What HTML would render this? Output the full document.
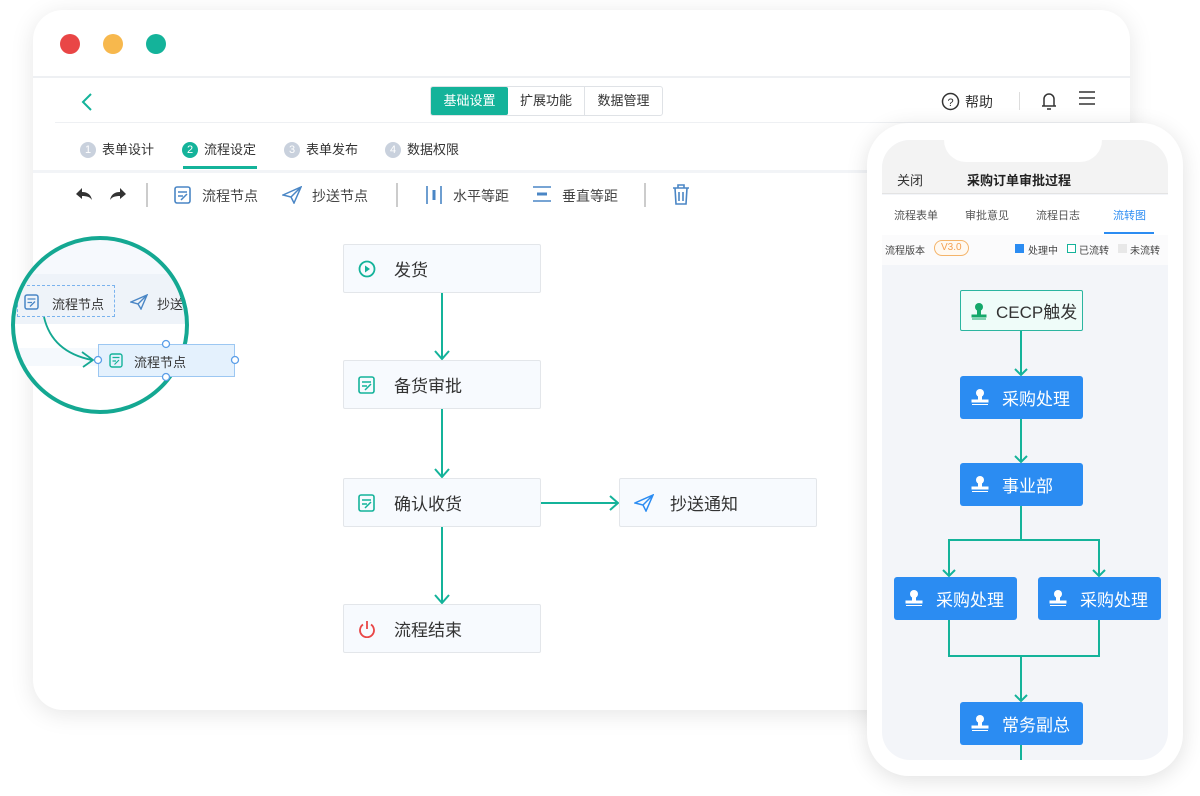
<!DOCTYPE html>
<html><head><meta charset="utf-8"><style>
*{box-sizing:border-box;margin:0;padding:0}
body{width:1200px;height:796px;background:#fff;position:relative;overflow:hidden;font-family:"Liberation Sans","Noto Sans CJK SC",sans-serif;color:#333}
.abs{position:absolute}
.win{left:33px;top:10px;width:1097px;height:700px;border-radius:30px;background:#fff;box-shadow:0 4px 24px rgba(0,0,0,.10)}
.dot{width:20px;height:20px;border-radius:50%;top:34px}
.node{background:#f7fafe;border:1px solid #e3e6ea;border-radius:2px;width:198px;height:49px;font-size:17px;color:#333;display:flex;align-items:center;padding-left:50px}
.node svg{position:absolute;left:14px;top:15px}
.pn{background:#2b8cf2;color:#fff;border-radius:3px;width:123px;height:43px;display:flex;align-items:center;font-size:17px;padding-left:42px}
.pn svg{position:absolute;left:10px;top:12px}
.tb{font-size:14px;color:#444}
.num{display:inline-block;width:16px;height:16px;border-radius:50%;background:#c9d1dd;color:#fff;font-size:11px;text-align:center;line-height:16px;margin-right:6px;vertical-align:1px}
</style></head><body>
<div class="abs win"></div>
<div class="abs dot" style="left:60px;background:#e94646"></div>
<div class="abs dot" style="left:103px;background:#f7b84d"></div>
<div class="abs dot" style="left:146px;background:#14b39a"></div>
<div class="abs" style="left:33px;top:76px;width:1097px;height:2px;background:#eef0f3"></div>
<!-- header -->
<svg class="abs" style="left:80px;top:92px" width="14" height="20"><path d="M11 2 L3 10 L11 18" stroke="#14b39a" stroke-width="2" fill="none"/></svg>
<div class="abs" style="left:430px;top:86px;width:233px;height:30px;border:1px solid #dfe2e6;border-radius:3px;display:flex;font-size:13px">
<div style="width:77px;background:#14b39a;color:#fff;text-align:center;line-height:28px;border-radius:2px">基础设置</div>
<div style="width:77px;text-align:center;line-height:28px;border-right:1px solid #dfe2e6">扩展功能</div>
<div style="width:77px;text-align:center;line-height:28px">数据管理</div></div>
<svg class="abs" style="left:941px;top:92px" width="19" height="19"><circle cx="9.5" cy="9.5" r="8" stroke="#333" stroke-width="1.5" fill="none"/><text x="9.5" y="14" font-size="11" text-anchor="middle" fill="#333" font-family="Liberation Sans">?</text></svg>
<div class="abs" style="left:965px;top:92px;font-size:14px">帮助</div>
<div class="abs" style="left:1019px;top:92px;width:1px;height:18px;background:#ddd"></div>
<svg class="abs" style="left:1041px;top:90px" width="16" height="22"><path d="M3 16 V9 a5 5 0 0 1 10 0 V16 Z M1 16 H15 M6 19 H10" stroke="#333" stroke-width="1.5" fill="none"/></svg>
<svg class="abs" style="left:1078px;top:90px" width="18" height="16"><path d="M1 2H17M1 8H17M1 14H17" stroke="#333" stroke-width="1.6"/></svg>
<div class="abs" style="left:55px;top:122px;width:1075px;height:1px;background:#eef0f3"></div>
<!-- steps -->
<div class="abs tb" style="left:80px;top:139px;font-size:13px;color:#333"><span class="num">1</span>表单设计</div>
<div class="abs tb" style="left:182px;top:139px;font-size:13px;color:#333"><span class="num" style="background:#14b39a">2</span>流程设定</div>
<div class="abs" style="left:183px;top:166px;width:74px;height:3px;background:#14b39a"></div>
<div class="abs tb" style="left:284px;top:139px;font-size:13px;color:#333"><span class="num">3</span>表单发布</div>
<div class="abs tb" style="left:385px;top:139px;font-size:13px;color:#333"><span class="num">4</span>数据权限</div>
<div class="abs" style="left:33px;top:170px;width:1097px;height:3px;background:#f2f4f7"></div>
<!-- toolbar -->
<svg class="abs" style="left:74px;top:186px" width="20" height="16"><path d="M8 2 L2 8 L8 13 V10 C13 10 16 11 18 14 C17 9 14 6 8 6 Z" fill="#333"/></svg>
<svg class="abs" style="left:108px;top:186px" width="20" height="16"><path d="M12 2 L18 8 L12 13 V10 C7 10 4 11 2 14 C3 9 6 6 12 6 Z" fill="#333"/></svg>
<div class="abs" style="left:146px;top:183px;width:2px;height:24px;background:#ccc"></div>
<svg class="abs" style="left:174px;top:186px" width="18" height="18"><rect x="1" y="1" width="15" height="16" rx="2" stroke="#4a86c5" stroke-width="1.6" fill="none"/><path d="M4 6H13M4 10H9M7 14L13 8" stroke="#4a86c5" stroke-width="1.5"/></svg>
<div class="abs tb" style="left:202px;top:186px">流程节点</div>
<svg class="abs" style="left:282px;top:186px" width="20" height="18"><path d="M1 9 L19 1 L12 17 L9 11 Z M9 11 L19 1" stroke="#4a86c5" stroke-width="1.5" fill="none"/></svg>
<div class="abs tb" style="left:312px;top:186px">抄送节点</div>
<div class="abs" style="left:396px;top:183px;width:2px;height:24px;background:#ccc"></div>
<svg class="abs" style="left:425px;top:185px" width="18" height="20"><path d="M2 1V19M16 1V19" stroke="#4a86c5" stroke-width="1.6"/><path d="M9 5V15" stroke="#4a86c5" stroke-width="3"/></svg>
<div class="abs tb" style="left:453px;top:186px">水平等距</div>
<svg class="abs" style="left:532px;top:185px" width="20" height="18"><path d="M1 2H19M1 16H19" stroke="#4a86c5" stroke-width="1.6"/><path d="M5 9H15" stroke="#4a86c5" stroke-width="3"/></svg>
<div class="abs tb" style="left:562px;top:186px">垂直等距</div>
<div class="abs" style="left:644px;top:183px;width:2px;height:24px;background:#ccc"></div>
<svg class="abs" style="left:672px;top:184px" width="18" height="21"><path d="M1 4H17M6 4V1H12V4M3 4L4 20H14L15 4M7 8V17M11 8V17" stroke="#4a86c5" stroke-width="1.6" fill="none"/></svg>
<!-- flow -->
<svg class="abs" style="left:0;top:0" width="860" height="710">
<g stroke="#14b39a" stroke-width="2" fill="none">
<path d="M442 293V359M435 351L442 359L449 351"/>
<path d="M442 409V477M435 469L442 477L449 469"/>
<path d="M442 527V603M435 595L442 603L449 595"/>
<path d="M541 503H618M610 496L618 503L610 510"/>
</g></svg>
<div class="abs node" style="left:343px;top:244px"><svg width="18" height="18"><circle cx="9" cy="9" r="7.5" stroke="#14b39a" stroke-width="1.8" fill="none"/><path d="M7 5.5L12 9L7 12.5Z" fill="#14b39a"/></svg>发货</div>
<div class="abs node" style="left:343px;top:360px"><svg width="18" height="18"><rect x="1" y="1" width="15" height="16" rx="2" stroke="#14b39a" stroke-width="1.6" fill="none"/><path d="M4 6H13M4 10H9M7 14L13 8" stroke="#14b39a" stroke-width="1.5"/></svg>备货审批</div>
<div class="abs node" style="left:343px;top:478px"><svg width="18" height="18"><rect x="1" y="1" width="15" height="16" rx="2" stroke="#14b39a" stroke-width="1.6" fill="none"/><path d="M4 6H13M4 10H9M7 14L13 8" stroke="#14b39a" stroke-width="1.5"/></svg>确认收货</div>
<div class="abs node" style="left:343px;top:604px"><svg width="18" height="18"><path d="M5 4.5A7 7 0 1 0 13 4.5M9 1V9" stroke="#e94646" stroke-width="1.8" fill="none"/></svg>流程结束</div>
<div class="abs node" style="left:619px;top:478px"><svg width="20" height="18"><path d="M1 9 L19 1 L12 17 L9 11 Z M9 11 L19 1" stroke="#2b8cf2" stroke-width="1.5" fill="none"/></svg>抄送通知</div>
<!-- magnifier -->
<div class="abs" style="left:13px;top:238px;width:174px;height:174px;border-radius:50%;overflow:hidden;background:#fff">
 <div class="abs" style="left:0;top:0;width:180px;height:36px;background:#f6f9fd"></div>
 <div class="abs" style="left:0;top:36px;width:180px;height:50px;background:#eef3f9"></div>
 <div class="abs" style="left:0;top:110px;width:180px;height:18px;background:#f5f9fd"></div>
 <div class="abs" style="left:4px;top:47px;width:98px;height:32px;border:1px dashed #7ab3ee"></div>
 <svg class="abs" style="left:11px;top:56px" width="16" height="16"><rect x="1" y="1" width="13" height="14" rx="2" stroke="#4a86c5" stroke-width="1.5" fill="none"/><path d="M3.5 5H11.5M3.5 8.5H8M6 12.5L11 7.5" stroke="#4a86c5" stroke-width="1.3"/></svg>
 <div class="abs" style="left:39px;top:56px;font-size:13px">流程节点</div>
 <svg class="abs" style="left:117px;top:56px" width="18" height="16"><path d="M1 8 L17 1 L11 15 L8 10 Z M8 10 L17 1" stroke="#4a86c5" stroke-width="1.4" fill="none"/></svg>
 <div class="abs" style="left:144px;top:56px;font-size:13px">抄送</div>
</div>
<svg class="abs" style="left:0;top:220px" width="250" height="210">
<circle cx="100" cy="105" r="87" stroke="#14a892" stroke-width="4" fill="none"/>
<path d="M44 97 Q52 132 92 140 M82 132 L93 140 L83 147" stroke="#14a892" stroke-width="1.8" fill="none"/>
</svg>
<div class="abs" style="left:98px;top:344px;width:137px;height:33px;background:#e4f1fd;border:1px solid #9cc7f2"></div>
<svg class="abs" style="left:109px;top:353px" width="15" height="15"><rect x="1" y="1" width="12" height="13" rx="2" stroke="#14b39a" stroke-width="1.4" fill="none"/><path d="M3.5 4.5H10.5M3.5 8H7M5.5 11.5L10 7" stroke="#14b39a" stroke-width="1.2"/></svg>
<div class="abs" style="left:134px;top:352px;font-size:13px">流程节点</div>
<svg class="abs" style="left:90px;top:336px" width="155" height="50"><g fill="#fff" stroke="#5b9ee8" stroke-width="1.3"><circle cx="8" cy="24" r="3.5"/><circle cx="145" cy="24" r="3.5"/><circle cx="76" cy="8" r="3.5"/><circle cx="76" cy="41" r="3.5"/></g></svg>
<!-- phone -->
<div class="abs" style="left:867px;top:123px;width:316px;height:653px;border-radius:42px;background:#fff;box-shadow:0 4px 22px rgba(0,0,0,.12)"></div>
<div class="abs" style="left:882px;top:140px;width:286px;height:620px;border-radius:28px;background:#f3f5f9;overflow:hidden">
 <div class="abs" style="left:0;top:0;width:286px;height:54px;background:#f3f3f3;border-bottom:1px solid #e3e3e3"></div>
 <div class="abs" style="left:62px;top:-2px;width:158px;height:24px;background:#fff;border-radius:0 0 22px 22px"></div>
 <div class="abs" style="left:15px;top:30px;font-size:13px;color:#333">关闭</div>
 <div class="abs" style="left:85px;top:30px;font-size:13px;font-weight:bold;color:#222">采购订单审批过程</div>
 <div class="abs" style="left:0;top:55px;width:286px;height:40px;background:#fff;font-size:11px;color:#555">
  <span class="abs" style="left:12px;top:12px">流程表单</span><span class="abs" style="left:83px;top:12px">审批意见</span><span class="abs" style="left:154px;top:12px">流程日志</span><span class="abs" style="left:231px;top:12px;color:#2b8cf2">流转图</span>
  <div class="abs" style="left:222px;top:37px;width:50px;height:2px;background:#2b8cf2"></div></div>
 <div class="abs" style="left:0;top:95px;width:286px;height:30px;background:#fbfbfc;font-size:10px;color:#444">
  <span class="abs" style="left:3px;top:7px">流程版本</span>
  <span class="abs" style="left:52px;top:5px;border:1px solid #f4b46a;color:#f4a050;border-radius:9px;padding:0 6px;line-height:14px;background:#fff9f1">V3.0</span>
  <span class="abs" style="left:133px;top:9px;width:9px;height:9px;background:#2b8cf2"></span><span class="abs" style="left:146px;top:7px">处理中</span>
  <span class="abs" style="left:185px;top:9px;width:9px;height:9px;border:1px solid #14b39a;background:#fff"></span><span class="abs" style="left:197px;top:7px">已流转</span>
  <span class="abs" style="left:236px;top:9px;width:9px;height:9px;background:#e8e8e8"></span><span class="abs" style="left:248px;top:7px">未流转</span>
 </div>
</div>
<svg class="abs" style="left:880px;top:280px" width="290" height="480">
<g stroke="#14b39a" stroke-width="2" fill="none">
<path d="M141 50V95M135 89L141 95L147 89"/>
<path d="M141 139V182M135 176L141 182L147 176"/>
<path d="M141 226V260H69V296M141 260H219V296M63 290L69 296L75 290M213 290L219 296L225 290"/>
<path d="M69 340V376H219V340M141 376V421M135 415L141 421L147 415"/>
<path d="M141 465V480"/>
</g></svg>
<div class="abs" style="left:960px;top:290px;width:123px;height:41px;background:#effcf9;border:1.5px solid #2bb5a0;border-radius:2px;display:flex;align-items:center;padding-left:35px;font-size:17px;color:#333">
<svg class="abs" style="left:8px;top:11px" width="20" height="18"><circle cx="10" cy="5" r="4" fill="#14a86a"/><path d="M3 13H17V15H3Z M3 17H17" fill="#14a86a" stroke="#14a86a"/><rect x="8" y="8" width="4" height="5" fill="#14a86a"/></svg>CECP触发</div>
<div class="abs pn" style="left:960px;top:376px"><svg width="20" height="18"><circle cx="10" cy="5" r="4" fill="#fff"/><rect x="8" y="8" width="4" height="5" fill="#fff"/><path d="M2 12H18V14H2Z M2 16.5H18" fill="#fff" stroke="#fff"/></svg>采购处理</div>
<div class="abs pn" style="left:960px;top:463px"><svg width="20" height="18"><circle cx="10" cy="5" r="4" fill="#fff"/><rect x="8" y="8" width="4" height="5" fill="#fff"/><path d="M2 12H18V14H2Z M2 16.5H18" fill="#fff" stroke="#fff"/></svg>事业部</div>
<div class="abs pn" style="left:894px;top:577px"><svg width="20" height="18"><circle cx="10" cy="5" r="4" fill="#fff"/><rect x="8" y="8" width="4" height="5" fill="#fff"/><path d="M2 12H18V14H2Z M2 16.5H18" fill="#fff" stroke="#fff"/></svg>采购处理</div>
<div class="abs pn" style="left:1038px;top:577px"><svg width="20" height="18"><circle cx="10" cy="5" r="4" fill="#fff"/><rect x="8" y="8" width="4" height="5" fill="#fff"/><path d="M2 12H18V14H2Z M2 16.5H18" fill="#fff" stroke="#fff"/></svg>采购处理</div>
<div class="abs pn" style="left:960px;top:702px"><svg width="20" height="18"><circle cx="10" cy="5" r="4" fill="#fff"/><rect x="8" y="8" width="4" height="5" fill="#fff"/><path d="M2 12H18V14H2Z M2 16.5H18" fill="#fff" stroke="#fff"/></svg>常务副总</div>
</body></html>
